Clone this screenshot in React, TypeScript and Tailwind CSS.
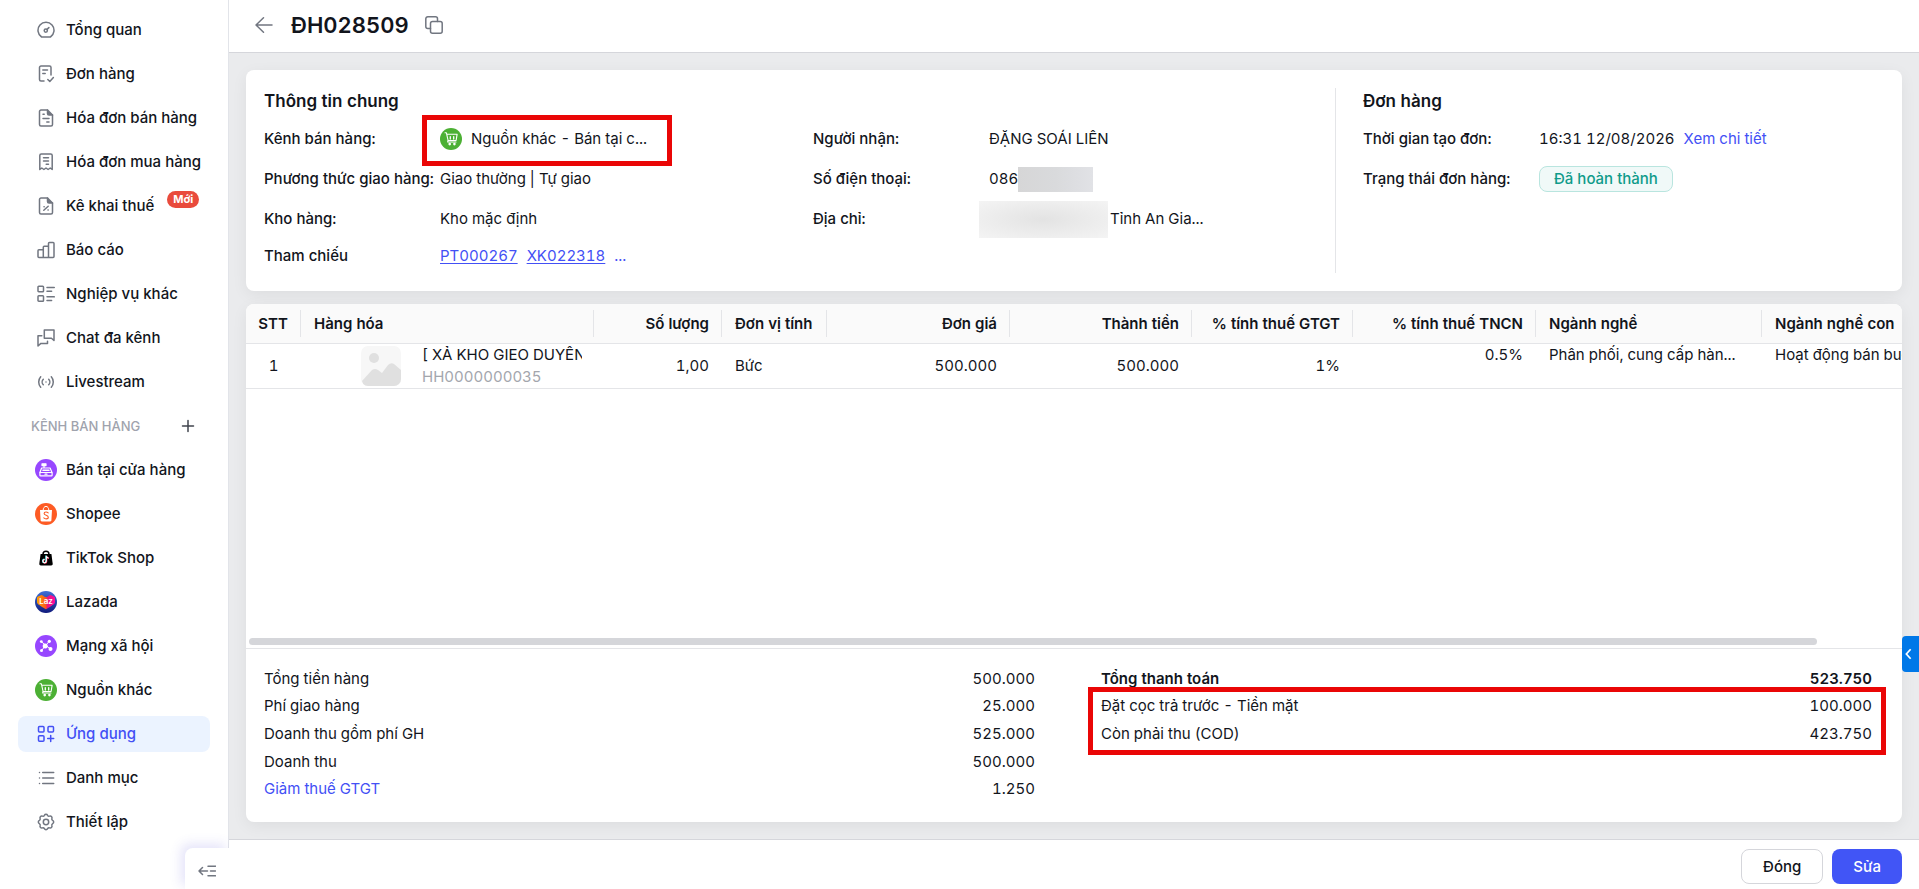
import type { ReactNode } from 'react';
import { clsx } from 'clsx';

type IconProps = { children: ReactNode; className?: string };

// 18px line icon used by the menu and the toolbar
const LineIcon = ({ children, className }: IconProps) => (
  <svg
    viewBox="0 0 18 18"
    className={clsx('w-[18px] h-[18px] shrink-0', className)}
    fill="none"
    stroke="currentColor"
    strokeWidth="1.5"
    strokeLinecap="round"
    strokeLinejoin="round"
    aria-hidden="true"
  >
    {children}
  </svg>
);

const Channel = ({ children }: { children: ReactNode }) => (
  <svg viewBox="0 0 22 22" className="w-[22px] h-[22px] shrink-0" fill="none" aria-hidden="true">
    {children}
  </svg>
);

const CartBadge = () => (
  <Channel>
    <circle cx="11" cy="11" r="11" fill="#4cb034" />
    <g stroke="#fff" strokeWidth="1.1" strokeLinecap="round" strokeLinejoin="round">
      <path d="M5 4.8h1.4l1.7 7.7h8l1-6.2H7" />
      <path d="M10.3 8.6v2.4M13.7 8.6v2.4" strokeWidth="1.3" />
      <path d="M8.1 12.5 7.6 14H16" />
    </g>
    <circle cx="9.7" cy="16.1" r="1.3" fill="#fff" />
    <circle cx="14.4" cy="16.1" r="1.3" fill="#fff" />
  </Channel>
);

const mainItems = [
  {
    label: 'Tổng quan',
    icon: (
      <LineIcon>
        <path d="M4.6 16h8.8a8 8 0 1 0-8.8 0Z" />
        <circle cx="8.8" cy="9.6" r="1.6" />
        <path d="m10 8.4 1.9-1.8" />
      </LineIcon>
    ),
  },
  {
    label: 'Đơn hàng',
    icon: (
      <LineIcon>
        <path d="M14 10V2.5C14 1.7 13.3 1 12.5 1H4C3.2 1 2.5 1.7 2.5 2.5v12c0 .8.7 1.5 1.5 1.5h3" />
        <path d="M5.8 5h4.7M5.8 8.5h2.4M10.8 14.5l2 2 3.6-4" />
      </LineIcon>
    ),
  },
  {
    label: 'Hóa đơn bán hàng',
    icon: (
      <LineIcon>
        <path d="M10.5 1H4C3.2 1 2.5 1.7 2.5 2.5v13C2.5 16.3 3.2 17 4 17h10c.8 0 1.5-.7 1.5-1.5V6Z" />
        <path d="M10.5 1v3.5c0 .8.7 1.5 1.5 1.5h3.500" fill="currentColor" />
        <path d="M6 5.2h1.2M6 9.500h6M9.800 13h2.200" />
      </LineIcon>
    ),
  },
  {
    label: 'Hóa đơn mua hàng',
    icon: (
      <LineIcon>
        <path d="M2.8 16.5V2.5C2.8 1.7 3.5 1 4.3 1h9.4c.8 0 1.5.7 1.5 1.5v14l-2-1.5-2.1 1.5L9 15l-2.1 1.5L4.800 15Z" />
        <path d="M6.500 4.700h5M6.500 8h5M9.200 11.300h2.300" />
      </LineIcon>
    ),
  },
  {
    label: 'Kê khai thuế',
    tag: 'Mới',
    icon: (
      <LineIcon>
        <path d="M10.5 1H4C3.2 1 2.5 1.7 2.5 2.5v13C2.5 16.3 3.2 17 4 17h10c.8 0 1.5-.7 1.5-1.5V6Z" />
        <path d="M10.5 1v3.5c0 .8.7 1.5 1.5 1.5h3.5" fill="currentColor" />
        <path d="m6.8 13.2 4.4-4M7 9.7h.2M11 12.9h.2" />
      </LineIcon>
    ),
  },
  {
    label: 'Báo cáo',
    icon: (
      <LineIcon>
        <path d="M1 9.7c0-.5.4-.9.9-.9h4.4V16.500H1.900a.9.9 0 0 1-.9-.9ZM6.300 6.200c0-.5.4-.9.9-.9h4.300v11.200H6.300ZM11.500 2.400c0-.5.4-.9.9-.9h3.700c.5 0 .9.4.9.9v13.200c0 .5-.4.9-.9.9h-4.600Z" />
      </LineIcon>
    ),
  },
  {
    label: 'Nghiệp vụ khác',
    icon: (
      <LineIcon>
        <rect x="1" y="1.3" width="5.5" height="5.5" rx=".8" />
        <rect x="1" y="10.8" width="5.5" height="5.5" rx=".8" />
        <path d="M10 2.5h7.3M10 6.2h4.6M10 11.8h7.3M10 15.5h4.6" />
      </LineIcon>
    ),
  },
  {
    label: 'Chat đa kênh',
    icon: (
      <LineIcon>
        <path d="M7.3 1h9.7v10.5l-2.6-2.3H7.300Z" />
        <path d="M4.8 6.8H1V17l2.9-2.6h6.600v-2.200" />
      </LineIcon>
    ),
  },
  {
    label: 'Livestream',
    icon: (
      <LineIcon>
        <path d="M3.7 3.8a7.8 7.8 0 0 0 0 10.4M14.3 3.8a7.8 7.8 0 0 1 0 10.4M6.3 6.2a4 4 0 0 0 0 5.6M11.7 6.2a4 4 0 0 1 0 5.6M9 9h.01" />
      </LineIcon>
    ),
  },
];

const channels = [
  {
    label: 'Bán tại cửa hàng',
    icon: (
      <Channel>
        <circle cx="11" cy="11" r="11" fill="#9747ff" />
        <g stroke="#fff" strokeWidth="1.2" strokeLinejoin="round" strokeLinecap="round">
          <rect x="7" y="4.8" width="4" height="1.8" fill="#fff" />
          <path d="M9 6.6v2M6.6 9h8.5l1.9 4.500H4.900Z" />
          <path d="M8 11.2h6" strokeWidth="1.6" />
          <rect x="4.9" y="13.5" width="12.2" height="3.3" rx=".6" />
          <path d="M10 15.2h2" />
        </g>
      </Channel>
    ),
  },
  {
    label: 'Shopee',
    icon: (
      <Channel>
        <circle cx="11" cy="11" r="11" fill="#fd5b24" />
        <path d="M8.2 7.2c0-2.3 1.2-3.8 2.8-3.8s2.8 1.5 2.8 3.8" stroke="#fff" strokeWidth="1" />
        <path d="M5 7h12l-.6 10.3c0 .7-.5 1.2-1.2 1.200H6.800c-.7 0-1.200-.5-1.200-1.200Z" fill="#fff" />
        <path
          d="M13.2 9.8c-.7-.6-1.4-.8-2.2-.8-1.1 0-1.9.6-1.9 1.5 0 2.1 4.2 1.5 4.2 3.7 0 1-.9 1.7-2.1 1.7-1 0-1.8-.4-2.4-1"
          stroke="#fd5b24"
          strokeWidth="1.1"
          strokeLinecap="round"
        />
      </Channel>
    ),
  },
  {
    label: 'TikTok Shop',
    icon: (
      <Channel>
        <path d="M8 7.2C8 5.3 9.3 4.2 11 4.2s3 1.1 3 3" stroke="#000" strokeWidth="1.4" />
        <path d="M5.6 7h10.8l1.3 9.8c.1 1-.6 1.7-1.5 1.7H5.8c-.9 0-1.6-.7-1.5-1.7Z" fill="#000" />
        <path d="M11.3 8.8v5.3a1.7 1.7 0 1 1-1.7-1.7M11.3 9c.2 1.2 1 1.9 2.3 2" stroke="#25f4ee" strokeWidth="1.2" transform="translate(-.4 -.2)" />
        <path d="M11.3 8.8v5.3a1.7 1.7 0 1 1-1.7-1.7M11.3 9c.2 1.2 1 1.9 2.3 2" stroke="#fe2c55" strokeWidth="1.2" transform="translate(.4 .3)" />
        <path d="M11.3 8.8v5.3a1.7 1.7 0 1 1-1.7-1.7M11.3 9c.2 1.2 1 1.9 2.3 2" stroke="#fff" strokeWidth="1.2" />
      </Channel>
    ),
  },
  {
    label: 'Lazada',
    icon: (
      <Channel>
        <defs>
          <linearGradient id="lazBg" x1="0" y1="0" x2="0" y2="1">
            <stop offset="0" stopColor="#3f6fd6" />
            <stop offset="1" stopColor="#101a7c" />
          </linearGradient>
          <linearGradient id="lazHeart" x1="0" y1="0" x2="1" y2="0">
            <stop offset="0" stopColor="#ffa200" />
            <stop offset=".5" stopColor="#f9571b" />
            <stop offset=".56" stopColor="#e6177d" />
            <stop offset="1" stopColor="#ff0a9c" />
          </linearGradient>
        </defs>
        <circle cx="11" cy="11" r="11" fill="url(#lazBg)" />
        <path
          d="M11 18.2c-.4 0-7.4-4.7-8.1-5.3-.6-.5-.9-1.1-.9-1.8V6.9c0-.5.3-.9.7-1.1.6-.4 3.2-1.7 3.9-1.7.6 0 1.8.9 2.6 1.4.6.4 1.1.6 1.8.6s1.2-.2 1.8-.6c.8-.5 2-1.4 2.6-1.4.7 0 3.3 1.3 3.9 1.7.4.2.7.6.7 1.1v4.2c0 .7-.3 1.3-.9 1.8-.7.6-7.7 5.3-8.1 5.3Z"
          fill="url(#lazHeart)"
        />
        <text x="11" y="13" textAnchor="middle" fontFamily="Inter, sans-serif" fontSize="8" fontWeight="600" fill="#fff">
          Laz
        </text>
      </Channel>
    ),
  },
  {
    label: 'Mạng xã hội',
    icon: (
      <Channel>
        <circle cx="11" cy="11" r="11" fill="#9747ff" />
        <path d="M6.3 6.7 15.5 14M14 6.5 6.5 15.5" stroke="#fff" strokeWidth="1" />
        <g fill="#fff">
          <circle cx="10.2" cy="11" r="2.5" />
          <circle cx="6.3" cy="6.6" r="1.4" />
          <circle cx="14.3" cy="6.3" r="1.6" />
          <circle cx="15.5" cy="14" r="2" />
          <circle cx="6.5" cy="15.5" r="1.5" />
        </g>
      </Channel>
    ),
  },
  { label: 'Nguồn khác', icon: <CartBadge /> },
];

const toolItems = [
  {
    label: 'Ứng dụng',
    active: true,
    icon: (
      <LineIcon>
        <rect x="1.5" y="1.5" width="5.5" height="5.5" rx="1" />
        <rect x="11" y="1.5" width="5.5" height="5.5" rx="1" />
        <rect x="1.5" y="10.8" width="5.5" height="5.5" rx="1" />
        <path d="M13.7 10.6v6M10.7 13.6h6" />
      </LineIcon>
    ),
  },
  {
    label: 'Danh mục',
    icon: (
      <LineIcon>
        <path d="M5.7 3.5h11M5.7 9h11M5.7 14.5h11M2.5 3.5h.01M2.5 9h.01M2.5 14.5h.01" />
      </LineIcon>
    ),
  },
  {
    label: 'Thiết lập',
    icon: (
      <LineIcon>
        <path d="M7.4 2.3a1.8 1.8 0 0 1 3.2 0 1.7 1.7 0 0 0 2 .8 1.8 1.8 0 0 1 2.3 2.3 1.7 1.7 0 0 0 .8 2 1.8 1.8 0 0 1 0 3.2 1.7 1.7 0 0 0-.8 2 1.8 1.8 0 0 1-2.3 2.3 1.7 1.7 0 0 0-2 .8 1.8 1.8 0 0 1-3.2 0 1.7 1.7 0 0 0-2-.8 1.8 1.8 0 0 1-2.3-2.3 1.7 1.7 0 0 0-.8-2 1.8 1.8 0 0 1 0-3.2 1.7 1.7 0 0 0 .8-2 1.8 1.8 0 0 1 2.3-2.3 1.7 1.7 0 0 0 2-.8Z" />
        <circle cx="9" cy="9" r="2.7" />
      </LineIcon>
    ),
  },
];

type MenuItemProps = { label: string; icon: ReactNode; active?: boolean; tag?: string };

const MenuItem = ({ label, icon, active, tag }: MenuItemProps) => (
  <a
    href="#"
    className={clsx(
      'flex items-center gap-[9px] h-9 pl-[17px] rounded-lg whitespace-nowrap font-medium',
      active ? 'bg-[#ebf3ff] text-[#4350f5]' : 'text-[#12151c]'
    )}
  >
    <span className={clsx('flex justify-center w-[22px] shrink-0', active ? 'text-[#4350f5]' : 'text-[#717680]')}>{icon}</span>
    {label}
    {tag && (
      <span className="self-start mt-[3px] ml-1 h-[17px] px-[6px] rounded-full bg-[#e94b3c] text-white text-[11px] leading-[17px] font-bold">
        {tag}
      </span>
    )}
  </a>
);

const Sidebar = () => (
  <aside className="relative w-[229px] shrink-0 bg-white border-r border-[#e2e4e9]">
    <nav className="flex flex-col gap-2 pt-3 px-[18px]">
      {mainItems.map(item => (
        <MenuItem key={item.label} {...item} />
      ))}
      <div className="flex items-center justify-between h-9 px-[13px]">
        <span className="text-[13px] font-medium text-[#9fa3ad]">KÊNH BÁN HÀNG</span>
        <button aria-label="Thêm kênh" className="text-[#40444d]">
          <LineIcon>
            <path d="M9 3.5v11M3.5 9h11" />
          </LineIcon>
        </button>
      </div>
      {channels.map(item => (
        <MenuItem key={item.label} {...item} />
      ))}
      {toolItems.map(item => (
        <MenuItem key={item.label} {...item} />
      ))}
    </nav>
    {/* Collapse button sits over the sidebar edge */}
    <button
      aria-label="Thu gọn"
      className="absolute bottom-0 -right-px w-11 h-[41px] pl-[13px] pt-1 rounded-tl-lg bg-white text-[#717680] shadow-[-4px_-4px_12px_rgba(90,80,220,0.16)] [clip-path:inset(-20px_0_0_-20px)]"
    >
      <LineIcon>
        <path d="M1 9h8.5M4.5 5.5 1 9l3.5 3.5M10 4.2h7.5M12.5 9h5M10 13.8h7.5" />
      </LineIcon>
    </button>
  </aside>
);

const Field = ({ label, children, last }: { label: string; children: ReactNode; last?: boolean }) => (
  <div className={clsx('flex items-center', last ? 'h-[34px]' : 'h-10')}>
    <dt className="w-[176px] shrink-0 font-medium whitespace-nowrap">{label}</dt>
    <dd className="relative flex items-center whitespace-nowrap">{children}</dd>
  </div>
);

const InfoCard = () => (
  <section className="flex bg-white rounded-lg py-[18px] pl-[18px] shadow-[0_4px_16px_rgba(0,0,0,0.06)]">
    <div className="flex-1 border-r border-[#e4e5e8]">
      <h2 className="mb-[5px] text-[17px] leading-[26px] font-semibold">Thông tin chung</h2>
      <div className="flex">
        <dl className="w-[549px]">
          <Field label="Kênh bán hàng:">
            <CartBadge />
            <span className="ml-[9px]">Nguồn khác - Bán tại c...</span>
            <span className="absolute -left-[18px] -top-[13px] w-[250px] h-[51px] border-5 border-[#ea0606]" />
          </Field>
          <Field label="Phương thức giao hàng:">Giao thường | Tự giao</Field>
          <Field label="Kho hàng:">Kho mặc định</Field>
          <Field label="Tham chiếu" last>
            <span className="flex gap-[9px] text-[#4350f5]">
              <a href="#" className="underline underline-offset-2">PT000267</a>
              <a href="#" className="underline underline-offset-2">XK022318</a>
              <span>...</span>
            </span>
          </Field>
        </dl>
        <dl>
          <Field label="Người nhận:">ĐẶNG SOÁI LIÊN</Field>
          <Field label="Số điện thoại:">
            086
            <span className="w-[75px] h-[25px] bg-linear-to-r from-[#d6d6d7] via-[#d9dadc] to-[#e1e2e6]" />
          </Field>
          <Field label="Địa chỉ:">
            <span className="-ml-[10px] mr-[2px] w-[129px] h-[37px] bg-radial from-[#e3e3e3] to-[#f4f4f4]" />
            Tỉnh An Gia...
          </Field>
        </dl>
      </div>
    </div>
    <div className="w-[566px] pl-[27px]">
      <h2 className="mb-[5px] text-[17px] leading-[26px] font-semibold">Đơn hàng</h2>
      <dl>
        <Field label="Thời gian tạo đơn:">
          16:31 12/08/2026
          <a href="#" className="ml-[9px] text-[#4350f5]">Xem chi tiết</a>
        </Field>
        <Field label="Trạng thái đơn hàng:">
          <span className="h-[26px] px-[14px] rounded-lg border border-[#b9e5df] bg-[#f0f9f8] text-[#0f9b8a] font-medium leading-6">
            Đã hoàn thành
          </span>
        </Field>
      </dl>
    </div>
  </section>
);

const columns = [
  { label: 'STT', width: 55, align: 'center' },
  { label: 'Hàng hóa', width: 293 },
  { label: 'Số lượng', width: 128, align: 'right' },
  { label: 'Đơn vị tính', width: 105 },
  { label: 'Đơn giá', width: 183, align: 'right' },
  { label: 'Thành tiền', width: 182, align: 'right' },
  { label: '% tính thuế GTGT', width: 161, align: 'right' },
  { label: '% tính thuế TNCN', width: 183, align: 'right' },
  { label: 'Ngành nghề', width: 226 },
  { label: 'Ngành nghề con', width: 230 },
];

const ItemsTable = () => (
  <div className="overflow-hidden">
    <table className="table-fixed w-[1746px] border-collapse whitespace-nowrap">
      <colgroup>
        {columns.map(col => (
          <col key={col.label} style={{ width: col.width }} />
        ))}
      </colgroup>
      <thead>
        <tr className="bg-[#fafafa] border-b border-[#e4e5e8]">
          {columns.map(col => (
            <th key={col.label} className="h-[39px] p-0 font-semibold">
              <div
                className={clsx(
                  'h-[27px] border-r border-[#e4e5e8] leading-[27px]',
                  col.align === 'right' && 'text-right pr-3',
                  col.align === 'center' && 'text-center',
                  !col.align && 'text-left pl-[13px]'
                )}
              >
                {col.label}
              </div>
            </th>
          ))}
        </tr>
      </thead>
      <tbody>
        <tr className="h-[45px] border-b border-[#e4e5e8]">
          <td className="text-center">1</td>
          <td className="p-0">
            <div className="flex items-center pl-[60px]">
              <svg viewBox="0 0 40 40" className="w-10 h-10 mr-[21px] shrink-0" aria-hidden="true">
                <clipPath id="thumb">
                  <rect width="40" height="40" rx="7" />
                </clipPath>
                <g clipPath="url(#thumb)">
                  <rect width="40" height="40" fill="#f7f7f7" />
                  <circle cx="13" cy="12" r="5" fill="#e0e0e0" />
                  <path d="M1 35 11 24q3-2 6 0l4 3 6-8q3-3 6-1l7 6v16H3Z" fill="#e0e0e0" />
                </g>
              </svg>
              <div className="w-[160px] overflow-hidden leading-[22px]">
                <div>[ XẢ KHO GIEO DUYÊN</div>
                <div className="text-[#a3a6ad]">HH0000000035</div>
              </div>
            </div>
          </td>
          <td className="pr-[13px] text-right">1,00</td>
          <td className="pl-[13px]">Bức</td>
          <td className="pr-[13px] text-right">500.000</td>
          <td className="pr-[13px] text-right">500.000</td>
          <td className="pr-[13px] text-right">1%</td>
          <td className="pr-[13px] text-right align-top leading-[22px]">0.5%</td>
          <td className="pl-[13px] align-top leading-[22px]">Phân phối, cung cấp hàn...</td>
          <td className="pl-[13px] align-top leading-[22px]">Hoạt động bán buôn</td>
        </tr>
      </tbody>
    </table>
  </div>
);

const totals = [
  { label: 'Tổng tiền hàng', value: '500.000' },
  { label: 'Phí giao hàng', value: '25.000' },
  { label: 'Doanh thu gồm phí GH', value: '525.000' },
  { label: 'Doanh thu', value: '500.000' },
  { label: 'Giảm thuế GTGT', value: '1.250', link: true },
];

const payments = [
  { label: 'Tổng thanh toán', value: '523.750', bold: true },
  { label: 'Đặt cọc trả trước - Tiền mặt', value: '100.000' },
  { label: 'Còn phải thu (COD)', value: '423.750' },
];

const Summary = () => (
  <div className="grid grid-cols-2 gap-x-[66px] pt-4 pb-[19px] pl-[18px] pr-[30px] border-t border-[#e4e5e8]">
    <dl className="grid grid-rows-5 h-[138px]">
      {totals.map(row => (
        <div key={row.label} className="flex items-center justify-between">
          <dt>{row.link ? <a href="#" className="text-[#4350f5]">{row.label}</a> : row.label}</dt>
          <dd>{row.value}</dd>
        </div>
      ))}
    </dl>
    <dl className="relative grid grid-rows-5 h-[138px]">
      {payments.map(row => (
        <div key={row.label} className={clsx('flex items-center justify-between', row.bold && 'font-semibold')}>
          <dt>{row.label}</dt>
          <dd>{row.value}</dd>
        </div>
      ))}
      <span className="absolute -left-[13px] -right-[14px] top-[22px] h-[68px] border-5 border-[#ea0606]" />
    </dl>
  </div>
);

const App = () => (
  <div className="relative flex h-screen overflow-hidden bg-[#eaebed] font-[Inter,sans-serif] tabular-nums text-[15px] leading-5 text-[#12151c]">
    <Sidebar />
    <div className="flex flex-col flex-1 min-w-0">
      <header className="flex items-center h-[53px] pl-[26px] pb-[2px] bg-white border-b border-[#d5d6db]">
        <button aria-label="Quay lại" className="text-[#717680]">
          <LineIcon>
            <path d="M1 9h16M8.5 1.8 1 9l7.500 7.200" />
          </LineIcon>
        </button>
        <h1 className="ml-[18px] mr-4 text-[22px] leading-8 font-semibold">ĐH028509</h1>
        <button aria-label="Sao chép" className="text-[#717680]">
          <LineIcon>
            <rect x="5.5" y="5.5" width="11.7" height="11.7" rx="2" />
            <path d="M5.5 12.5H2.8a2 2 0 0 1-2-2V2.8a2 2 0 0 1 2-2h7.700a2 2 0 0 1 2 2v2.700" />
          </LineIcon>
        </button>
      </header>

      <main className="flex flex-col flex-1 min-h-0 gap-[13px] px-[17px] py-[17px]">
        <InfoCard />
        <section className="flex flex-col flex-1 overflow-hidden bg-white rounded-lg shadow-[0_4px_16px_rgba(0,0,0,0.06)]">
          <ItemsTable />
          <div className="mt-auto mb-[3px] mx-[3px]">
            <div className="w-[95%] h-[7px] rounded-full bg-[#d5d6da]" />
          </div>
          <Summary />
        </section>
      </main>

      <footer className="flex items-center justify-end gap-[9px] h-[50px] pr-[17px] pt-1 bg-white border-t border-[#d5d6db]">
        <button className="h-[35px] px-[21px] rounded-lg border border-[#d5d6db] font-medium">Đóng</button>
        <button className="h-[35px] px-[21px] rounded-lg bg-[#4155f6] text-white font-medium">Sửa</button>
      </footer>
    </div>
    <button
      aria-label="Mở bảng hỗ trợ"
      className="absolute right-0 top-[636px] flex items-center w-[17px] h-9 pl-[2px] rounded-l bg-[#0078e8] text-white"
    >
      <svg viewBox="0 0 10 14" className="w-[9px] h-3" fill="none" stroke="currentColor" strokeWidth="2" aria-hidden="true">
        <path d="M7.5 1.500 2.500 7l5 5.500" />
      </svg>
    </button>
  </div>
);

export default App;
